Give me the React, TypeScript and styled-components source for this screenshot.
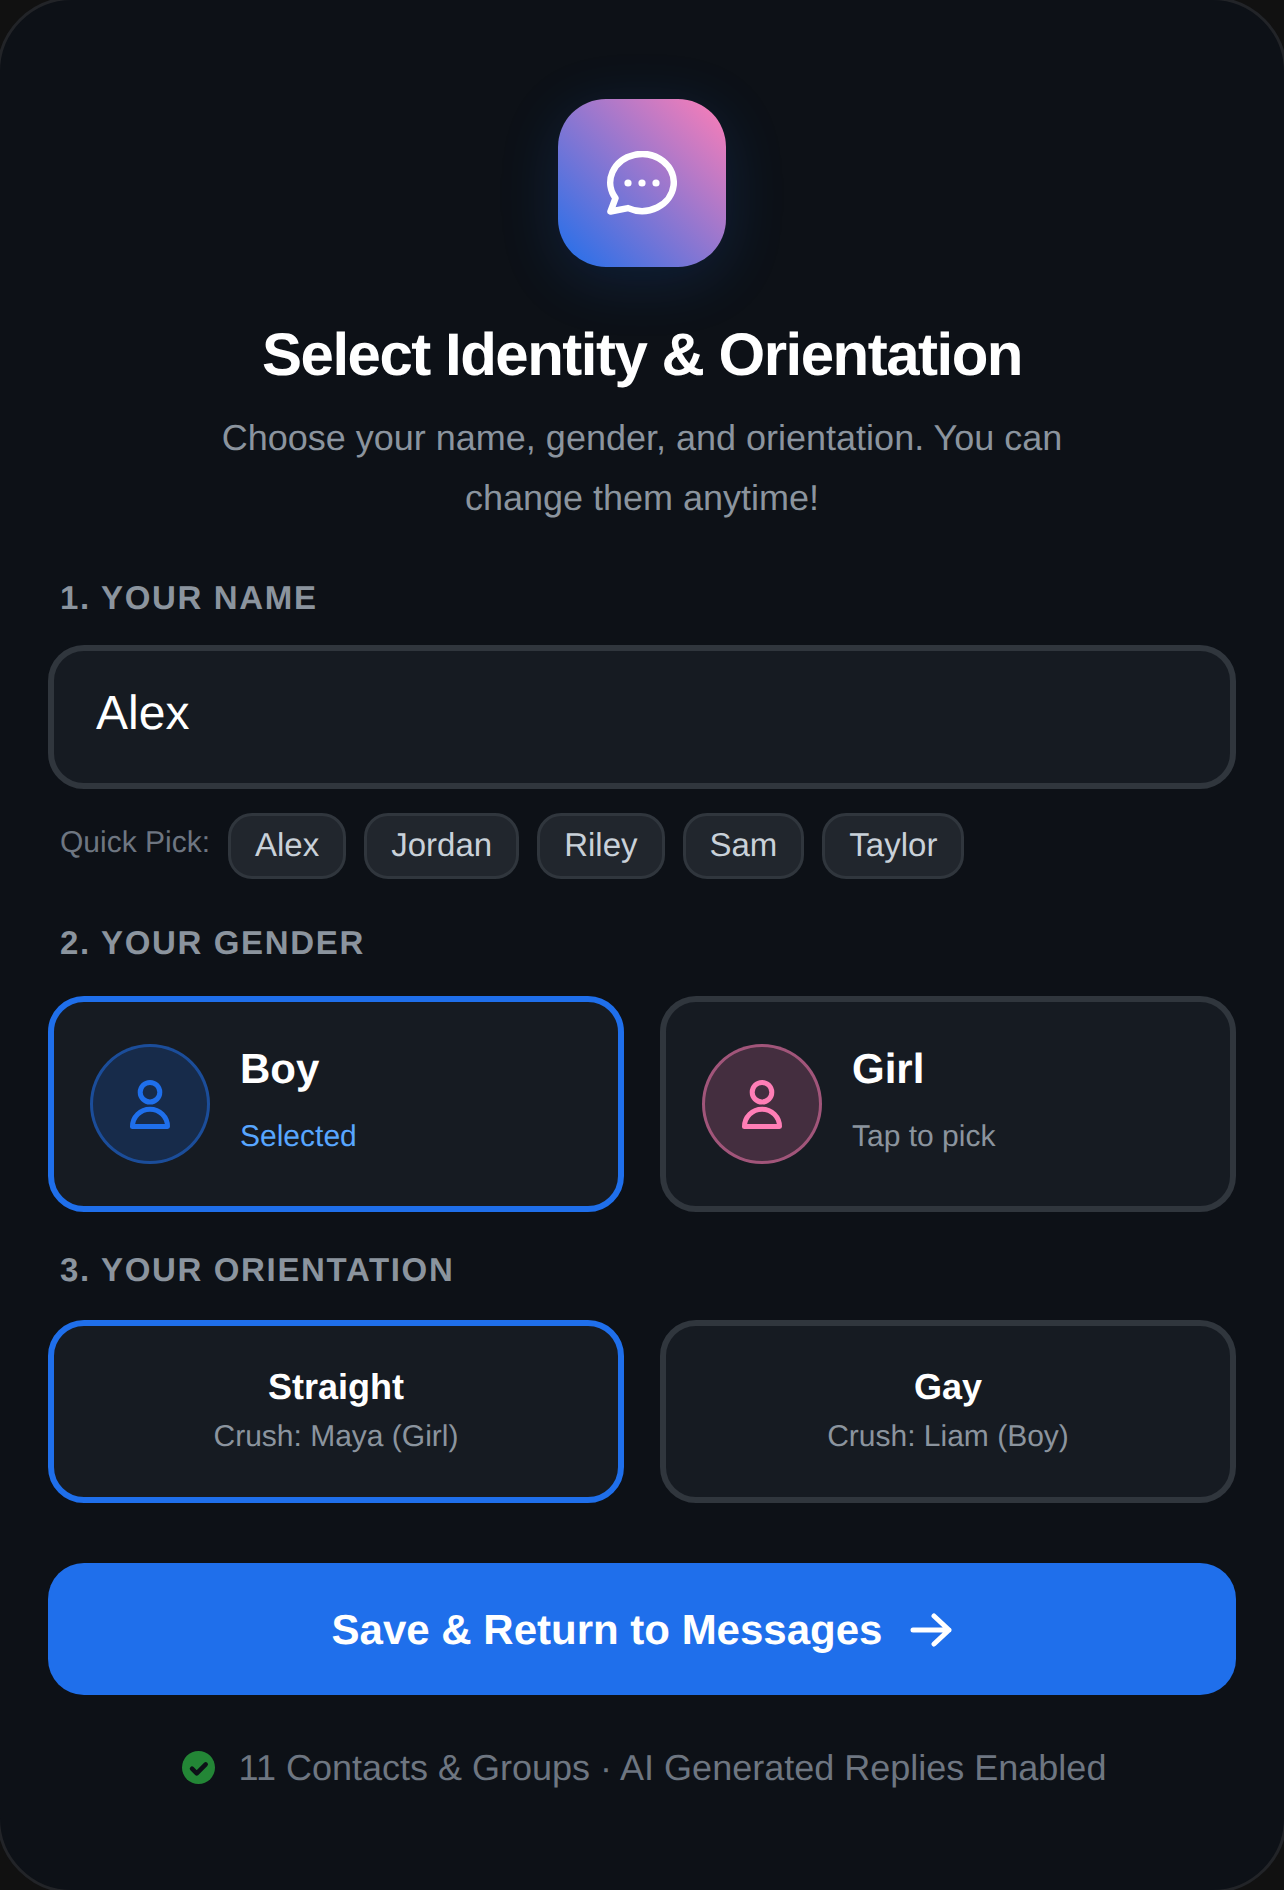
import styled, { createGlobalStyle } from "styled-components";

const names = ["Alex", "Jordan", "Riley", "Sam", "Taylor"];

const GlobalStyle = createGlobalStyle`
    html, body {
        margin: 0;
        padding: 0;
        background: #111111;
        overflow: hidden;
    }
    * {
        box-sizing: border-box;
    }
`

const Person = () => (
    <svg width="40" height="50" viewBox="0 0 40 50" fill="none" stroke="currentColor" strokeWidth="5" strokeLinejoin="round">
        <circle cx="20" cy="13.2" r="9.8" />
        <path d="M2.5 47.5A17.5 17.3 0 0 1 37.5 47.5Z" />
    </svg>
)

const App = () => {
    return (<Page>
        <GlobalStyle />
        <Logo>
            <svg width="70" height="64" viewBox="0 0 70 64" fill="none" stroke="#fff" strokeWidth="6.5" strokeLinejoin="round" strokeLinecap="round">
                <path d="M8.5 47.2L3.5 60.5L21 57.1A31.75 28.5 0 1 0 8.5 47.2Z" />
                <g fill="#fff" stroke="none">
                    <circle cx="21" cy="32" r="3.6" />
                    <circle cx="35" cy="32" r="3.6" />
                    <circle cx="49" cy="32" r="3.6" />
                </g>
            </svg>
        </Logo>
        <Title>Select Identity &amp; Orientation</Title>
        <Subtitle>Choose your name, gender, and orientation. You can<br />change them anytime!</Subtitle>

        <Label>1. YOUR NAME</Label>
        <NameBox>Alex</NameBox>
        <QuickRow>
            <QuickLabel>Quick Pick:</QuickLabel>
            {names.map(n => <Chip key={n}>{n}</Chip>)}
        </QuickRow>

        <GenderLabel>2. YOUR GENDER</GenderLabel>
        <GenderCols>
            <GenderCard $selected>
                <Avatar $color="#1f6feb"><Person /></Avatar>
                <CardText>
                    <CardTitle>Boy</CardTitle>
                    <CardHint $selected>Selected</CardHint>
                </CardText>
            </GenderCard>
            <GenderCard>
                <Avatar $color="#ff7eb6"><Person /></Avatar>
                <CardText>
                    <CardTitle>Girl</CardTitle>
                    <CardHint>Tap to pick</CardHint>
                </CardText>
            </GenderCard>
        </GenderCols>

        <OrientationLabel>3. YOUR ORIENTATION</OrientationLabel>
        <OrientationCols>
            <OrientationCard $selected>
                <OrientationTitle>Straight</OrientationTitle>
                <OrientationHint>Crush: Maya (Girl)</OrientationHint>
            </OrientationCard>
            <OrientationCard>
                <OrientationTitle>Gay</OrientationTitle>
                <OrientationHint>Crush: Liam (Boy)</OrientationHint>
            </OrientationCard>
        </OrientationCols>

        <SaveButton>
            Save &amp; Return to Messages
            <svg width="42" height="36" viewBox="0 0 42 36" fill="none" stroke="#fff" strokeWidth="5" strokeLinecap="round" strokeLinejoin="round">
                <path d="M3 18H39M24 4L39 18L24 32" />
            </svg>
        </SaveButton>

        <Footer>
            <FooterCheck width="33" height="33" viewBox="0 0 33 33">
                <circle cx="16.5" cy="16.5" r="16.5" fill="#238636" />
                <path d="M10 17.7L14.7 22.3L23.7 13.3" fill="none" stroke="#0d1117" strokeWidth="4.5" strokeLinecap="round" strokeLinejoin="round" />
            </FooterCheck>
            11 Contacts &amp; Groups · AI Generated Replies Enabled
        </Footer>
    </Page>)
}

const Page = styled.div`
    width: 1290px;
    height: 1896px;
    margin: -3px;
    padding: 99px 48px 0;
    background: #0d1117;
    border: 3px solid #222428;
    border-radius: 75px;
    font-family: "Liberation Sans", Arial, sans-serif;
    text-rendering: geometricPrecision;
    overflow: hidden;
`

const Logo = styled.div`
    width: 168px;
    height: 168px;
    margin: 0 auto;
    display: flex;
    align-items: center;
    justify-content: center;
    border-radius: 48px;
    background: linear-gradient(to top right, #1f6feb, #ff7eb6);
    box-shadow: 0 12px 60px rgba(31, 111, 235, 0.17);
`

const Title = styled.h1`
    margin: 52px 0 0;
    text-align: center;
    color: #fff;
    font-size: 60px;
    line-height: 72px;
    font-weight: 700;
    letter-spacing: -1.5px;
`

const Subtitle = styled.p`
    margin: 17px 0 0;
    text-align: center;
    color: #8b949e;
    font-size: 36px;
    line-height: 60px;
`

const Label = styled.div`
    margin: 51px 0 0;
    padding-left: 12px;
    color: #8b949e;
    font-size: 33px;
    line-height: 38px;
    font-weight: 700;
    letter-spacing: 1.65px;
`

const GenderLabel = styled(Label)`
    margin-top: 45px;
`

const OrientationLabel = styled(Label)`
    margin-top: 39px;
`

const NameBox = styled.div`
    margin-top: 28px;
    height: 144px;
    padding: 35px 42px;
    background: #161b22;
    border: 6px solid #30363d;
    border-radius: 36px;
    color: #fff;
    font-size: 48px;
    line-height: 56px;
`

const QuickRow = styled.div`
    margin-top: 24px;
    padding-left: 12px;
    display: flex;
    align-items: center;
    gap: 18px;
`

const QuickLabel = styled.span`
    padding-bottom: 7px;
    color: #6e7681;
    font-size: 30px;
`

const Chip = styled.span`
    height: 66px;
    padding: 0 24px 3px;
    display: flex;
    align-items: center;
    background: #21262d;
    border: 3px solid #30363d;
    border-radius: 24px;
    color: #c9d1d9;
    font-size: 33px;
`

const GenderCols = styled.div`
    margin-top: 34px;
    display: grid;
    grid-template-columns: 576px 576px;
    gap: 36px;
`

const OrientationCols = styled(GenderCols)`
    margin-top: 31px;
`

const GenderCard = styled.div<{ $selected?: boolean }>`
    height: 216px;
    padding: 0 36px;
    display: flex;
    align-items: center;
    gap: 30px;
    background: #161b22;
    border: 6px solid ${p => (p.$selected ? "#1f6feb" : "#30363d")};
    border-radius: 36px;
`

const Avatar = styled.div<{ $color: string }>`
    width: 120px;
    height: 120px;
    display: flex;
    align-items: center;
    justify-content: center;
    border-radius: 50%;
    color: ${p => p.$color};
    background: ${p => p.$color}33;
    border: 3px solid ${p => p.$color}80;
`

const CardText = styled.div`
    padding-bottom: 8px;
`

const CardTitle = styled.div`
    color: #fff;
    font-size: 42px;
    line-height: 48px;
    font-weight: 700;
    margin-bottom: 26px;
`

const CardHint = styled.div<{ $selected?: boolean }>`
    color: ${p => (p.$selected ? "#58a6ff" : "#8b949e")};
    font-size: 30px;
    line-height: 36px;
`

const OrientationCard = styled.div<{ $selected?: boolean }>`
    height: 183px;
    padding-bottom: 3px;
    display: flex;
    flex-direction: column;
    align-items: center;
    justify-content: center;
    background: #161b22;
    border: 6px solid ${p => (p.$selected ? "#1f6feb" : "#30363d")};
    border-radius: 36px;
`

const OrientationTitle = styled.div`
    color: #fff;
    font-size: 36px;
    line-height: 42px;
    font-weight: 700;
    margin-bottom: 11px;
`

const OrientationHint = styled.div`
    color: #8b949e;
    font-size: 30px;
    line-height: 36px;
`

const SaveButton = styled.div`
    margin-top: 60px;
    height: 132px;
    padding-top: 2px;
    display: flex;
    align-items: center;
    justify-content: center;
    gap: 28px;
    background: #1f6feb;
    border-radius: 36px;
    color: #fff;
    font-size: 42px;
    font-weight: 700;
`

const Footer = styled.div`
    margin-top: 52px;
    padding-left: 4px;
    display: flex;
    align-items: center;
    justify-content: center;
    gap: 24px;
    color: #6e7681;
    font-size: 36px;
    line-height: 42px;
`

const FooterCheck = styled.svg`
    margin-bottom: 2px;
`

export default App
